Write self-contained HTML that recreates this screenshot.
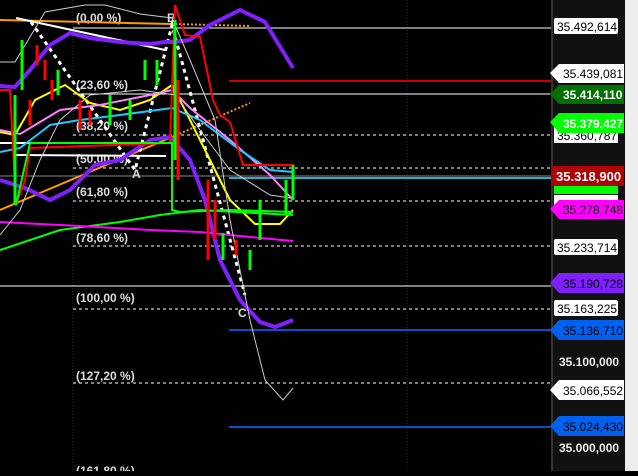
<!DOCTYPE html><html><head><style>body{margin:0;background:#000;width:638px;height:471px;overflow:hidden;font-family:"Liberation Sans",sans-serif}</style></head><body>
<svg width="638" height="471" xmlns="http://www.w3.org/2000/svg" font-family="Liberation Sans, sans-serif">
<rect width="638" height="471" fill="#000"/>
<rect x="551" y="0" width="74" height="471" fill="#111"/>
<rect x="625" y="0" width="13" height="471" fill="#eee"/>
<line x1="552" y1="0" x2="552" y2="471" stroke="#333" stroke-width="2"/>
<line x1="73" y1="0" x2="73" y2="471" stroke="#333" stroke-dasharray="1,2"/>
<line x1="407" y1="0" x2="407" y2="471" stroke="#333" stroke-dasharray="1,2"/>
<g stroke="#fff" stroke-width="1">
<line x1="73" y1="28" x2="551" y2="28"/><line x1="73" y1="94" x2="551" y2="94"/>
<line x1="0" y1="286" x2="551" y2="286"/>
<line x1="0" y1="176" x2="551" y2="176" stroke="#888"/>
</g>
<g stroke="#fff" stroke-dasharray="3,3">
<line x1="73" y1="135" x2="551" y2="135"/><line x1="73" y1="168" x2="551" y2="168"/><line x1="73" y1="201" x2="551" y2="201"/><line x1="73" y1="246" x2="551" y2="246"/><line x1="73" y1="309" x2="551" y2="309"/><line x1="73" y1="383" x2="551" y2="383"/>
</g>
<line x1="229" y1="81" x2="551" y2="81" stroke="#c00" stroke-width="2"/>
<line x1="229" y1="330" x2="551" y2="330" stroke="#0050d0" stroke-width="2"/>
<line x1="229" y1="427" x2="551" y2="427" stroke="#0050d0" stroke-width="2"/>
<line x1="229" y1="178" x2="551" y2="178" stroke="#20b0d0" stroke-width="2"/>
<g fill="#ddd" font-size="12" font-weight="bold">
<text x="76" y="22">(0,00 %)</text><text x="76" y="89">(23,60 %)</text><text x="76" y="130">(38,20 %)</text><text x="76" y="163">(50,00 %)</text><text x="76" y="196">(61,80 %)</text><text x="76" y="242">(78,60 %)</text><text x="76" y="302">(100,00 %)</text><text x="76" y="380">(127,20 %)</text><text x="76" y="475">(161,80 %)</text>
<text x="167" y="22">B</text><text x="132" y="178">A</text><text x="238" y="317">C</text>
</g>
<!-- indicator lines -->
<polyline fill="none" stroke="#f90" stroke-width="2" points="0,20 172,24"/>
<polyline fill="none" stroke="#f90" stroke-width="2" points="0,210 172,137"/>
<polyline fill="none" stroke="#f90" stroke-width="2" stroke-dasharray="2,2" points="172,137 250,103"/>
<polyline fill="none" stroke="#f90" stroke-width="2" stroke-dasharray="2,2" points="175,24 250,26"/>
<polyline fill="none" stroke="#fff" stroke-width="2" points="16,18 165,50"/>
<polyline fill="none" stroke="#fff" stroke-width="2" points="16,155 166,156"/>
<polyline fill="none" stroke="#fff" stroke-width="2" points="0,143 170,143"/>
<polyline fill="none" stroke="#fff" stroke-width="3" stroke-dasharray="4,4" points="31,22 135,170 172,25 245,295"/>
<polyline fill="none" stroke="#8020ff" stroke-width="4" points="0,86 15,87 30,70 50,45 70,33 90,38 120,42 150,44 165,42 175,42 190,40 210,25 240,10 265,22 293,68"/>
<polyline fill="none" stroke="#8020ff" stroke-width="4" points="0,180 25,188 50,200 70,190 95,165 120,160 150,140 170,137 190,160 205,200 220,260 240,300 260,322 275,327 293,320"/>
<polyline fill="none" stroke="#ff0" stroke-width="2" points="0,132 15,135 35,100 65,85 90,103 120,110 150,100 172,85 185,110 205,150 230,200 255,224 280,224 293,210"/>
<polyline fill="none" stroke="#ff80ff" stroke-width="2" points="0,130 20,134 60,110 100,105 150,95 172,90 190,108 230,140 270,175 293,200"/>
<polyline fill="none" stroke="#20c8ff" stroke-width="2" points="0,152 20,148 50,125 80,120 120,115 172,108 200,120 240,150 270,170 293,172"/>
<polyline fill="none" stroke="#f00" stroke-width="2" points="0,90 10,90 16,205 25,180 30,148 170,143 175,5 185,35 200,37 213,100 220,115 230,122 243,165 293,165"/>
<polyline fill="none" stroke="#0f0" stroke-width="2" points="16,205 30,143 172,143 172,210 180,212 230,210 293,212"/>
<polyline fill="none" stroke="#0f0" stroke-width="2" points="0,250 60,230 120,222 160,215 200,210 293,215"/>
<polyline fill="none" stroke="#f0f" stroke-width="2" points="0,222 80,226 150,230 200,232 240,236 293,241"/>
<polyline fill="none" stroke="#ccc" stroke-width="1" points="0,62 15,62 45,12 85,5 105,5 140,14 172,18 190,60 215,120 230,220 250,320 265,380 283,400 293,388"/>
<polyline fill="none" stroke="#ccc" stroke-width="1" points="0,235 20,210 40,160 60,120 90,95 140,90 175,95 200,130 230,170 270,195 290,198"/>
<g stroke="#f00" stroke-width="3"><line x1="30" y1="100" x2="30" y2="125"/><line x1="37" y1="45" x2="37" y2="65"/><line x1="45" y1="60" x2="45" y2="80"/><line x1="52" y1="80" x2="52" y2="100"/><line x1="80" y1="100" x2="80" y2="130"/><line x1="90" y1="110" x2="90" y2="125"/><line x1="178" y1="80" x2="178" y2="180"/><line x1="208" y1="180" x2="208" y2="260"/><line x1="215" y1="200" x2="215" y2="240"/><line x1="236" y1="240" x2="236" y2="255"/></g>
<g stroke="#0f0" stroke-width="3"><line x1="15" y1="95" x2="15" y2="205"/><line x1="22" y1="40" x2="22" y2="90"/><line x1="58" y1="70" x2="58" y2="95"/><line x1="110" y1="95" x2="110" y2="125"/><line x1="130" y1="100" x2="130" y2="120"/><line x1="145" y1="60" x2="145" y2="80"/><line x1="157" y1="60" x2="157" y2="85"/><line x1="175" y1="20" x2="175" y2="160"/><line x1="223" y1="233" x2="223" y2="260"/><line x1="250" y1="250" x2="250" y2="270"/><line x1="260" y1="200" x2="260" y2="240"/><line x1="286" y1="180" x2="286" y2="215"/><line x1="293" y1="165" x2="293" y2="200"/></g>
<!-- axis labels -->
<g font-size="12">
<rect x="554" y="18" width="64" height="16" fill="#fff" rx="2"/><text x="557" y="31" fill="#000">35.492,614</text>
<polygon points="550,73 559,64 624,64 624,83 559,83" fill="#fff"/><text x="563" y="78" fill="#000">35.439,081</text>
<polygon points="550,94 559,85 624,85 624,104 559,104" fill="#007000"/><text x="563" y="99" fill="#fff" font-weight="bold">35.414,110</text>
<rect x="554" y="127" width="64" height="16" fill="#fff"/><text x="557" y="140" fill="#000">35.360,787</text>
<polygon points="550,122 559,113 624,113 624,133 559,133" fill="#0f0"/><text x="563" y="128" fill="#fff" font-weight="bold">35.379,427</text>
<rect x="554" y="168" width="64" height="26" fill="#0f0"/>
<rect x="552" y="166" width="72" height="20" fill="#b00000"/><text x="556" y="181" fill="#fff" font-weight="bold" font-size="13">35.318,900</text>
<rect x="554" y="195" width="64" height="10" fill="#fff"/>
<polygon points="550,209 559,200 624,200 624,219 559,219" fill="#f0f"/><text x="563" y="214" fill="#000">35.278,748</text>
<rect x="554" y="239" width="64" height="16" fill="#fff" rx="2"/><text x="557" y="252" fill="#000">35.233,714</text>
<polygon points="550,283 559,273 624,273 624,293 559,293" fill="#8020ff"/><text x="563" y="288" fill="#000">35.190,728</text>
<rect x="554" y="300" width="64" height="16" fill="#fff" rx="2"/><text x="557" y="313" fill="#000">35.163,225</text>
<polygon points="550,330 559,320 624,320 624,340 559,340" fill="#0060f0"/><text x="563" y="335" fill="#000">35.136,710</text>
<text x="559" y="366" fill="#eee" font-weight="bold">35.100,000</text>
<polygon points="550,390 559,380 624,380 624,400 559,400" fill="#fff"/><text x="563" y="395" fill="#000">35.066,552</text>
<polygon points="550,426 559,416 624,416 624,436 559,436" fill="#0060f0"/><text x="563" y="431" fill="#000">35.024,430</text>
<text x="559" y="452" fill="#eee" font-weight="bold">35.000,000</text>
</g>
</svg>
</body></html>
